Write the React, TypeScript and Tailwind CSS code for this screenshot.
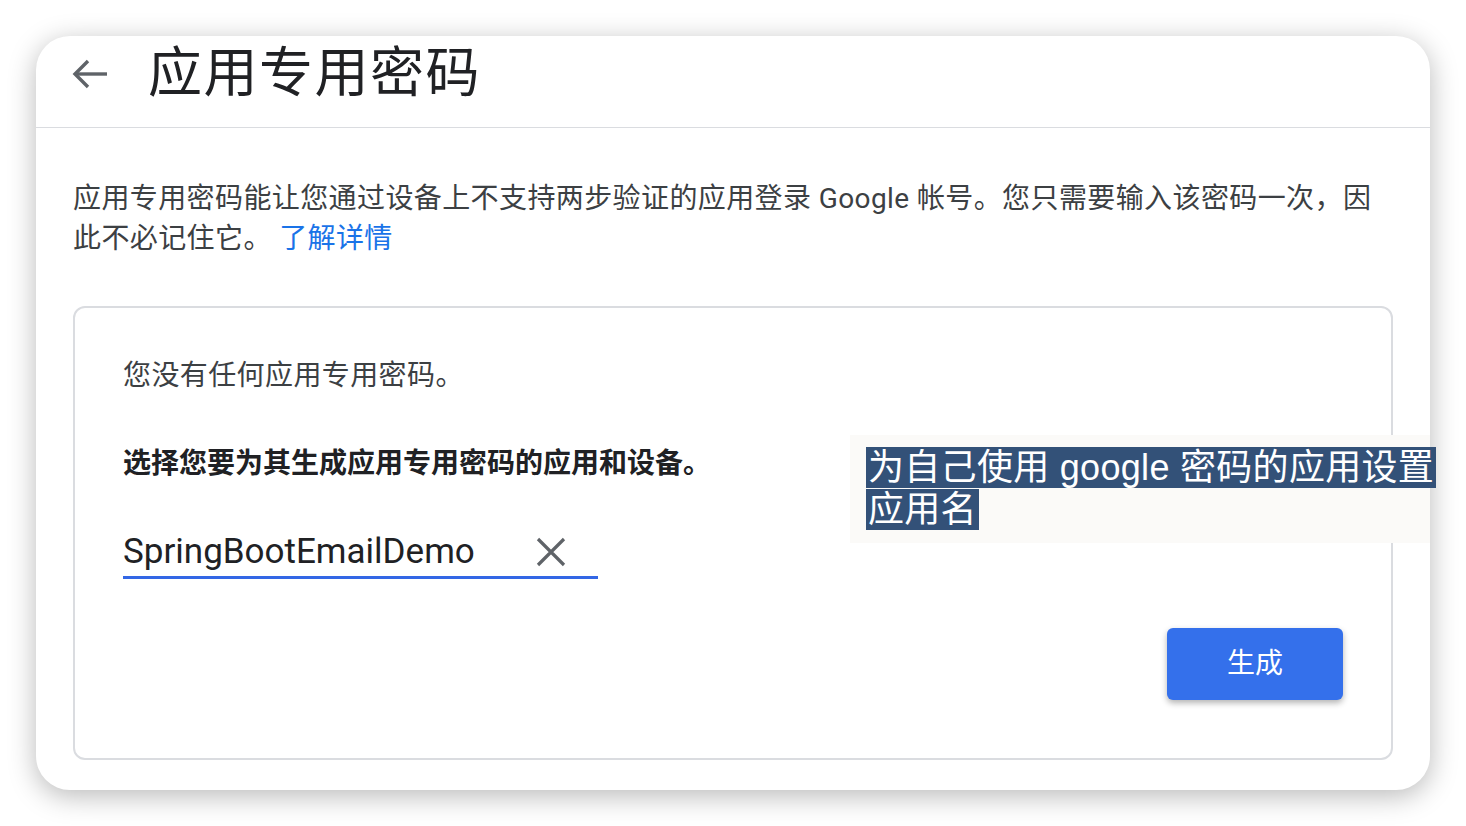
export default function App() {
  const cjk = { fontFamily: "Roboto, 'Noto Sans CJK SC', sans-serif" };
  return (
    <main className="min-h-screen w-full bg-white pt-[36px] pl-[36px]" style={cjk}>
      <div className="relative w-[1394px] h-[754px] rounded-[34px] bg-white shadow-[0_6px_28px_rgba(0,0,0,0.28)] flex flex-col">
        {/* header */}
        <div className="h-[92px] border-b border-[#dadce0] pl-[36px] pb-[16px] flex items-center gap-[40px]">
          <svg width="36" height="30" viewBox="0 0 36 30" fill="none" stroke="#5f6368" strokeWidth="3.4">
            <path d="M3 15H35" />
            <path d="M16 2L3 15L16 28" />
          </svg>
          <h1 className="text-[54px] leading-none text-[#202124] tracking-[1.5px]">应用专用密码</h1>
        </div>

        <div className="px-[37px] pt-[51px] pb-[30px] flex-1 flex flex-col">
          <p className="w-[1305px] text-[28px] leading-[40px] tracking-[0.4px] text-[#3c4043]">
            应用专用密码能让您通过设备上不支持两步验证的应用登录 Google 帐号。您只需要输入该密码一次，因此不必记住它。{" "}
            <span className="text-[#1a73e8]">了解详情</span>
          </p>

          <div className="mt-[47px] flex-1 rounded-[12px] border-2 border-[#dadce0] pl-[48px] pr-[48px] pt-[48px] pb-[58px] flex flex-col">
            <p className="text-[28px] leading-[40px] tracking-[0.4px] text-[#3c4043]">您没有任何应用专用密码。</p>
            <p className="mt-[48px] text-[28px] leading-[40px] font-bold text-[#202124]">
              选择您要为其生成应用专用密码的应用和设备。
            </p>
            <div className="mt-[46px] w-[475px] border-b-[3px] border-[#3367e5] flex items-center justify-between pb-[2px]">
              <span className="text-[35px] leading-[44px] text-[#202124]" style={{ fontFamily: "Roboto, sans-serif" }}>
                SpringBootEmailDemo
              </span>
              <svg className="mr-[32px]" width="30" height="30" viewBox="0 0 30 30" stroke="#5f6368" strokeWidth="3.2">
                <path d="M2 2L28 28M28 2L2 28" />
              </svg>
            </div>
            <div className="mt-auto flex justify-end">
              <button className="w-[176px] h-[72px] rounded-[6px] bg-[#3470eb] text-white text-[28px] shadow-[0_3px_6px_rgba(0,0,0,0.3)]">
                生成
              </button>
            </div>
          </div>
        </div>

        {/* annotation */}
        <div className="absolute left-[814px] top-[399px] w-[580px] h-[108px] bg-[#fbfaf8]" />
        <div
          className="absolute left-[830px] top-[411px] w-[640px] text-[36px] leading-[42px] tracking-[0.3px] text-white"
          style={{ fontFamily: "'Liberation Sans', 'Noto Sans CJK SC', sans-serif" }}
        >
          <span className="bg-[#335178] px-[2px]">为自己使用 google 密码的应用设置</span>
          <br />
          <span className="bg-[#335178] px-[2px]">应用名</span>
        </div>
      </div>
    </main>
  );
}
